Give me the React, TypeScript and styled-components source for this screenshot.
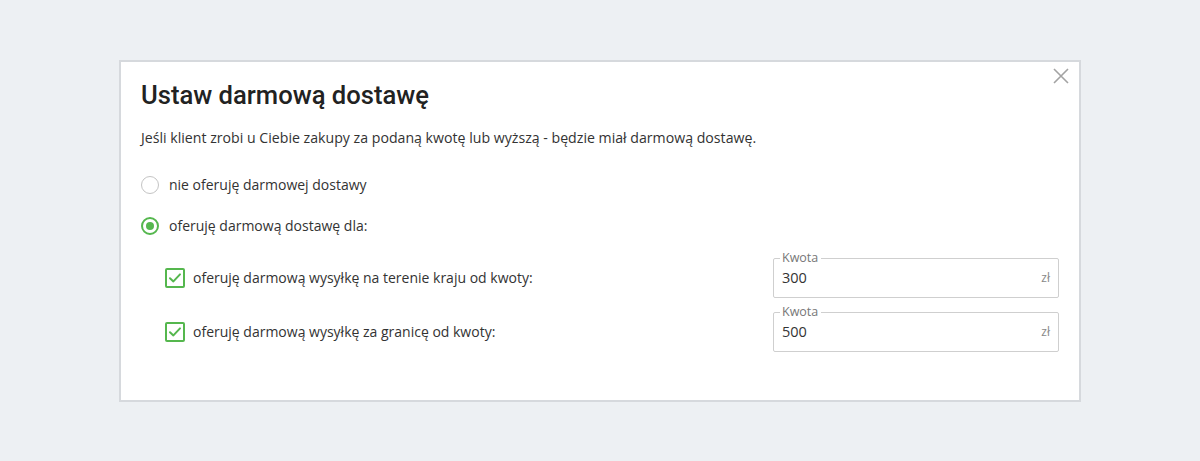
import React, { useState } from 'react';
import styled, { createGlobalStyle } from 'styled-components';

const GREEN = '#55b74e';

const GlobalStyle = createGlobalStyle`
  html, body {
    margin: 0;
    padding: 0;
    background: #edf0f3;
  }
  body {
    font-family: "Open Sans", "Liberation Sans", sans-serif;
    color: #333;
  }
`;

const Page = styled.div`
  min-height: 461px;
  display: flex;
  align-items: center;
  justify-content: center;
`;

const Card = styled.div`
  position: relative;
  width: 918px;
  height: 293px;
  padding: 17px 20px 28px 20px;
  background: #fff;
  border: 2px solid #d6d9dd;
`;

const CloseButton = styled.button`
  position: absolute;
  top: 4px;
  right: 8px;
  width: 20px;
  height: 20px;
  padding: 0;
  border: 0;
  background: transparent;
  cursor: pointer;
  display: flex;
  align-items: center;
  justify-content: center;
`;

const Title = styled.h1`
  margin: 0;
  font-family: Roboto, "Liberation Sans", sans-serif;
  font-weight: 500;
  font-size: 25.6px;
  line-height: 32px;
  color: #222;
`;

const Description = styled.p`
  margin: 17px 0 0 0;
  font-size: 14.15px;
  line-height: 20px;
  color: #333;
`;

const Options = styled.div`
  margin-top: 25px;
  display: flex;
  flex-direction: column;
  gap: 17px;
`;

const RadioRow = styled.label`
  display: flex;
  align-items: center;
  gap: 10px;
  height: 24px;
  font-size: 14px;
  cursor: pointer;
`;

const RadioCircle = styled.span<{ $checked: boolean }>`
  box-sizing: border-box;
  width: 18px;
  height: 18px;
  border-radius: 50%;
  border: ${p => (p.$checked ? `2px solid ${GREEN}` : '1px solid #c4c4c4')};
  display: flex;
  align-items: center;
  justify-content: center;
  flex-shrink: 0;
  &::after {
    content: '';
    display: ${p => (p.$checked ? 'block' : 'none')};
    width: 8px;
    height: 8px;
    border-radius: 50%;
    background: ${GREEN};
  }
`;

const Thresholds = styled.div`
  margin-top: 20px;
  padding-left: 24px;
  display: flex;
  flex-direction: column;
  gap: 14px;
`;

const ThresholdRow = styled.div`
  display: flex;
  align-items: center;
  justify-content: space-between;
  height: 40px;
`;

const CheckLabel = styled.label`
  display: flex;
  align-items: center;
  gap: 8px;
  font-size: 14px;
  cursor: pointer;
`;

const CheckBox = styled.span`
  box-sizing: border-box;
  width: 20px;
  height: 20px;
  border: 2px solid ${GREEN};
  border-radius: 2px;
  display: flex;
  align-items: center;
  justify-content: center;
  flex-shrink: 0;
`;

const Field = styled.div`
  position: relative;
  box-sizing: border-box;
  width: 286px;
  height: 40px;
  border: 1px solid #cfcfcf;
  border-radius: 2px;
  display: flex;
  align-items: center;
  padding: 0 8px 0 8px;
`;

const FieldLabel = styled.span`
  position: absolute;
  top: -9px;
  left: 6px;
  padding: 0 3px 0 2px;
  background: #fff;
  font-size: 12.5px;
  line-height: 16px;
  color: #777;
`;

const FieldInput = styled.input`
  flex: 1;
  min-width: 0;
  border: 0;
  outline: none;
  padding: 0;
  font-family: "Open Sans", "Liberation Sans", sans-serif;
  font-size: 14.5px;
  color: #333;
  background: transparent;
`;

const Unit = styled.span`
  font-size: 12px;
  color: #888;
`;

const CheckIcon = () => (
  <svg width="14" height="14" viewBox="0 0 14 14" fill="none">
    <path d="M2 7.2 L5.4 10.4 L12 3.4" stroke={GREEN} strokeWidth="2" strokeLinecap="round" strokeLinejoin="round" />
  </svg>
);

const CloseIcon = () => (
  <svg width="16" height="16" viewBox="0 0 16 16" fill="none">
    <path d="M1 1 L15 15 M15 1 L1 15" stroke="#a3a3a3" strokeWidth="1.6" />
  </svg>
);

const thresholds = [
  { id: 'domestic', label: 'oferuję darmową wysyłkę na terenie kraju od kwoty:', value: '300' },
  { id: 'abroad', label: 'oferuję darmową wysyłkę za granicę od kwoty:', value: '500' },
];

const App = () => {
  const [mode, setMode] = useState<'none' | 'free'>('free');
  const [values, setValues] = useState<Record<string, string>>({ domestic: '300', abroad: '500' });

  return (
    <>
      <GlobalStyle />
      <Page>
        <Card>
          <CloseButton aria-label="Zamknij">
            <CloseIcon />
          </CloseButton>
          <Title>Ustaw darmową dostawę</Title>
          <Description>
            Jeśli klient zrobi u Ciebie zakupy za podaną kwotę lub wyższą - będzie miał darmową dostawę.
          </Description>
          <Options>
            <RadioRow onClick={() => setMode('none')}>
              <RadioCircle $checked={mode === 'none'} />
              nie oferuję darmowej dostawy
            </RadioRow>
            <RadioRow onClick={() => setMode('free')}>
              <RadioCircle $checked={mode === 'free'} />
              oferuję darmową dostawę dla:
            </RadioRow>
          </Options>
          <Thresholds>
            {thresholds.map(t => (
              <ThresholdRow key={t.id}>
                <CheckLabel>
                  <CheckBox>
                    <CheckIcon />
                  </CheckBox>
                  {t.label}
                </CheckLabel>
                <Field>
                  <FieldLabel>Kwota</FieldLabel>
                  <FieldInput
                    value={values[t.id]}
                    onChange={e => setValues({ ...values, [t.id]: e.target.value })}
                  />
                  <Unit>zł</Unit>
                </Field>
              </ThresholdRow>
            ))}
          </Thresholds>
        </Card>
      </Page>
    </>
  );
};

export default App;
